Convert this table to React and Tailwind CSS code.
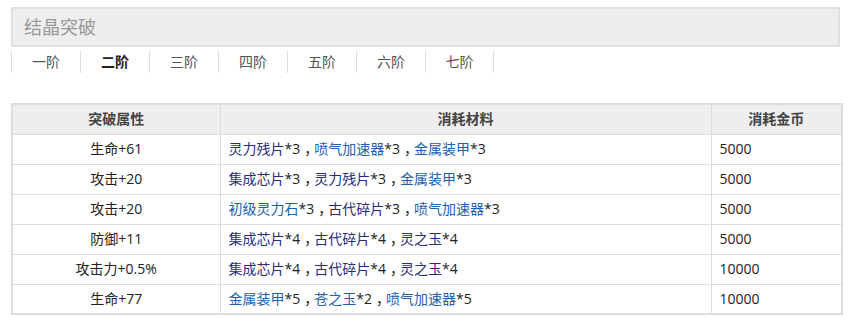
import React from "react";

const tabs = ["一阶", "二阶", "三阶", "四阶", "五阶", "六阶", "七阶"];

// n = dark (visited) link, b = blue link
const rows = [
  { attr: "生命+61", mats: [["灵力残片", 3, "n"], ["喷气加速器", 3, "b"], ["金属装甲", 3, "b"]], gold: "5000" },
  { attr: "攻击+20", mats: [["集成芯片", 3, "n"], ["灵力残片", 3, "n"], ["金属装甲", 3, "b"]], gold: "5000" },
  { attr: "攻击+20", mats: [["初级灵力石", 3, "b"], ["古代碎片", 3, "n"], ["喷气加速器", 3, "b"]], gold: "5000" },
  { attr: "防御+11", mats: [["集成芯片", 4, "n"], ["古代碎片", 4, "n"], ["灵之玉", 4, "n"]], gold: "5000" },
  { attr: "攻击力+0.5%", mats: [["集成芯片", 4, "n"], ["古代碎片", 4, "n"], ["灵之玉", 4, "n"]], gold: "10000" },
  { attr: "生命+77", mats: [["金属装甲", 5, "b"], ["苍之玉", 2, "b"], ["喷气加速器", 5, "b"]], gold: "10000" },
];

const App = () => {
  return (
    <div
      className="w-[851px] h-[336px] bg-white pt-[7px] pl-[11px] text-[#333]"
      style={{ fontFamily: '"Open Sans", "Noto Sans CJK SC", sans-serif' }}
    >
      {/* Title bar */}
      <div className="w-[829px] h-[40px] border-2 border-[#e0e0e0] bg-[#eeeeee] flex items-center pl-[11px]">
        <span className="text-[18px] leading-none text-[#999]">结晶突破</span>
      </div>

      {/* Tabs */}
      <div className="flex mt-[4px] h-[22px]">
        {tabs.map((t, i) => (
          <div
            key={t}
            className={`w-[69px] h-[22px] flex items-center justify-center border-l border-[#ddd] text-[14px] leading-none ${
              i === 1 ? "text-[#222] font-bold" : "text-[#555]"
            } ${i === tabs.length - 1 ? "border-r" : ""}`}
          >
            {t}
          </div>
        ))}
      </div>

      {/* Table */}
      <table className="mt-[30px] w-[830px] border-collapse border-2 border-[#ddd] text-[14px] table-fixed">
        <colgroup>
          <col className="w-[208px]" />
          <col className="w-[491px]" />
          <col className="w-[131px]" />
        </colgroup>
        <thead>
          <tr className="h-[30px] bg-[#eeeeee]">
            <th className="border border-[#ddd] font-bold text-[#444] text-center p-0 leading-none">突破属性</th>
            <th className="border border-[#ddd] font-bold text-[#444] text-center p-0 leading-none">消耗材料</th>
            <th className="border border-[#ddd] font-bold text-[#444] text-center p-0 leading-none">消耗金币</th>
          </tr>
        </thead>
        <tbody>
          {rows.map((r, i) => (
            <tr key={i} className="h-[30px]">
              <td className="border border-[#ddd] text-center p-0 leading-none text-[#222]">{r.attr}</td>
              <td className="border border-[#ddd] pl-[8px] py-0 leading-none whitespace-nowrap text-[#222]">
                {r.mats.map(([name, n, c], j) => (
                  <React.Fragment key={j}>
                    <span className={c === "n" ? "text-[#2a2c7c]" : "text-[#2160ad]"}>{name}</span>
                    <span>*{n}</span>
                    {j < r.mats.length - 1 && (
                      <span className="inline-block w-[14px] pl-[4px] tracking-[-4px]">，</span>
                    )}
                  </React.Fragment>
                ))}
              </td>
              <td className="border border-[#ddd] pl-[8px] py-0 leading-none text-[#222]">{r.gold}</td>
            </tr>
          ))}
        </tbody>
      </table>
    </div>
  );
};

export default App;
